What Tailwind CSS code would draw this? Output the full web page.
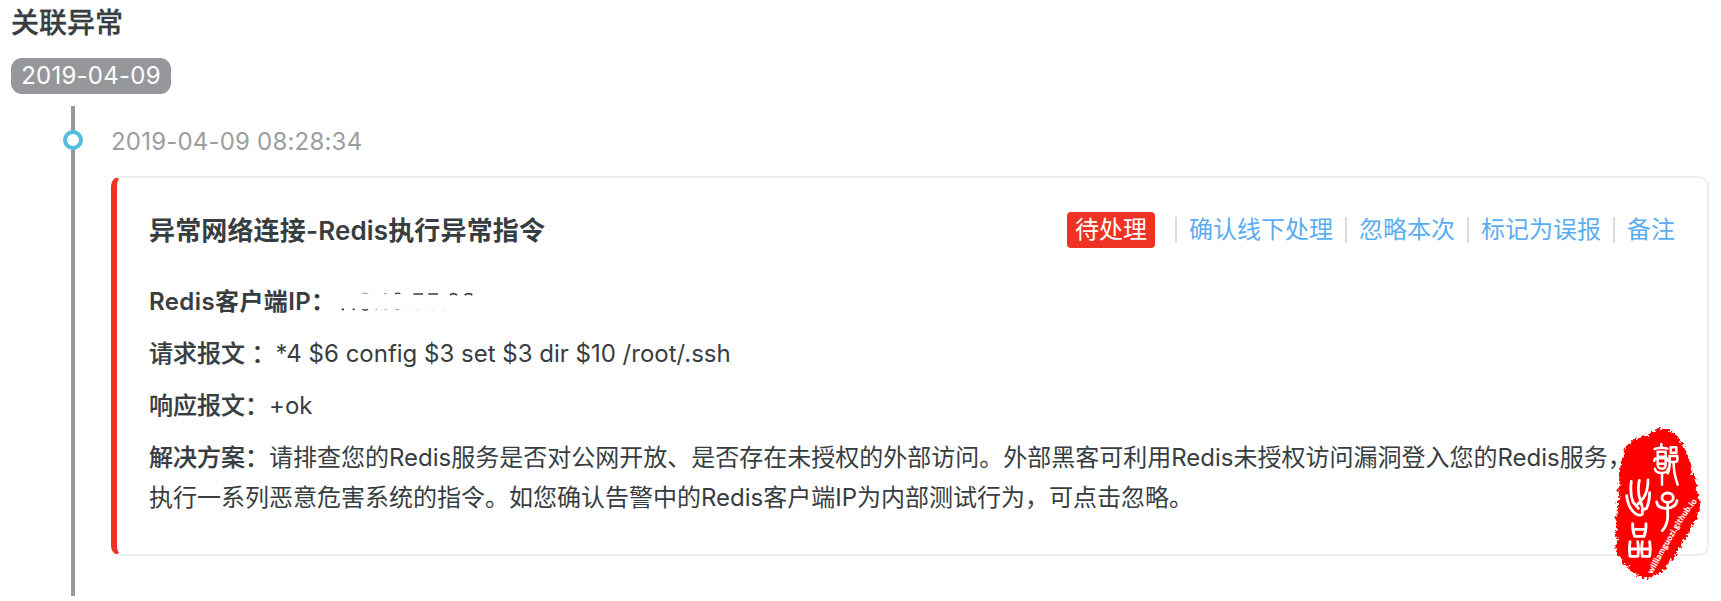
<!DOCTYPE html>
<html lang="zh-CN">
<head>
<meta charset="utf-8">
<title>关联异常</title>
<script src="https://cdn.jsdelivr.net/npm/@tailwindcss/browser@4"></script>
</head>
<body class="bg-white text-[#373d41] font-[Inter,'Noto_Sans_CJK_SC',sans-serif] text-2xl">
<main class="relative h-[601px] w-[1721px] overflow-hidden pl-[11px]">
  <h1 class="h-[58px] pt-px text-[28px] leading-[44px] font-medium [-webkit-text-stroke:0.3px]">关联异常</h1>
  <div class="flex h-9 w-40 items-center justify-center rounded-[11px] bg-[#96979a] tracking-[0.25px] text-white">2019-04-09</div>
  <section class="relative mt-3 ml-[60px] h-[490px] border-l-4 border-[#96999b] pt-4 pl-9">
    <span class="absolute top-6 -left-3 size-5 rounded-full border-4 border-[#55bedb] bg-white"></span>
    <time class="block h-[54px] w-max leading-10 tracking-[0.2px] text-[#9b9ea0]">2019-04-09 08:28:34</time>
    <article class="h-[380px] w-[1598px] rounded-[10px] border-2 border-l-[6px] border-[#eee] border-l-[#ee3324] pt-[34px] pr-8 pl-8">
      <header class="flex h-9 items-center justify-between">
        <h2 class="pt-0.5 text-[26px] tracking-[0.15px] font-semibold">异常网络连接-Redis执行异常指令</h2>
        <nav class="flex items-center text-[#5badf2]">
          <span class="mr-5 flex h-9 w-[88px] items-center justify-center rounded bg-[#ee3324] text-white">待处理</span>
          <a class="border-l-2 border-[#ddd] px-3 leading-[26px]">确认线下处理</a>
          <a class="border-l-2 border-[#ddd] px-3 leading-[26px]">忽略本次</a>
          <a class="border-l-2 border-[#ddd] px-3 leading-[26px]">标记为误报</a>
          <a class="border-l-2 border-[#ddd] pl-3 leading-[26px]">备注</a>
        </nav>
      </header>
      <div class="mt-[34px] flex flex-col gap-3 leading-10">
        <p class="flex items-start"><b class="w-[181px] tracking-[0.4px] font-semibold whitespace-nowrap">Redis客户端IP：</b>
          <svg class="mt-[3px] h-[35px] w-[160px]" viewBox="0 0 480 105" fill="none" stroke="#373d41">
            <g stroke-width="5">
              <path d="M250 27h29M295 27h29"/>
              <path d="M360 30Q370 22 381 30M404 30Q415 22 427 30"/>
              <path d="M195 26Q203 23 211 26" stroke-width="4"/>
              <path d="M35 73h7M68 73h6"/>
              <path d="M97 73Q105 77 114 73" stroke-width="4"/>
            </g>
            <path d="M97 25h18M162 26h9M136 73h6M164 73h6M196 74h12" stroke-width="3" opacity=".5"/>
            <path d="M230 75h8M257 75h14M302 75h12M338 76h7" stroke-width="2" opacity=".2"/>
          </svg>
        </p>
        <p><b class="font-medium [-webkit-text-stroke:0.2px]">请求报文 ：</b>*4 $6 config $3 set $3 dir $10 /root/.ssh</p>
        <p><b class="font-medium [-webkit-text-stroke:0.2px]">响应报文：</b>+ok</p>
        <p class="whitespace-nowrap"><b class="font-medium [-webkit-text-stroke:0.2px]">解决方案：</b>请排查您的Redis服务是否对公网开放、是否存在未授权的外部访问。外部黑客可利用Redis未授权访问漏洞登入您的Redis服务，<br>执行一系列恶意危害系统的指令。如您确认告警中的Redis客户端IP为内部测试行为，可点击忽略。</p>
      </div>
    </article>
  </section>
  <!-- Red seal stamp over the card's corner -->
  <svg class="absolute top-[420px] left-[1600px] h-[165px] w-[121px]" viewBox="0 0 363 495">
    <defs>
      <filter id="rough" x="-10%" y="-10%" width="120%" height="120%" color-interpolation-filters="sRGB">
        <feTurbulence type="fractalNoise" baseFrequency="0.12" numOctaves="2" seed="4" result="n"/>
        <feDisplacementMap in="SourceGraphic" in2="n" scale="22" xChannelSelector="R" yChannelSelector="G"/>
      </filter>
      <path id="rim" d="M157 463 Q196 388 246 306 Q270 270 293 243"/>
    </defs>
    <path filter="url(#rough)" fill="#f00" stroke="#f00" stroke-width="3" d="M73 92 80 78 92 70 98 62 113 56 122 51 145 48 151 38 166 36 175 26 185 29 200 29 213 34 226 44 236 53 240 66 251 83 257 98 262 112 269 127 270 146 274 158 284 172 287 191 286 205 293 225 298 248 297 272 292 290 285 305 272 315 268 331 259 350 247 361 242 380 231 395 222 411 207 423 195 443 178 459 158 468 135 474 115 467 97 456 87 442 70 430 64 415 53 398 48 382 53 361 48 337 51 315 48 293 55 272 54 250 60 230 56 209 61 185 58 158 64 137 64 116 73 110Z"/>
    <g fill="none" stroke="#fff" stroke-width="8.5" stroke-linecap="round" stroke-linejoin="round">
      <g stroke-width="7.5">
        <path d="M184 72V84M164 87Q184 80 202 86M173 95H197V110H173ZM163 123Q163 115 170 115H198Q205 115 205 123M173 120V134Q174 146 185 146Q197 146 197 134V120M174 131H196M165 146Q166 159 185 159Q202 159 204 146M186 159V194"/>
        <path d="M212 82H229V98H212ZM208 108H232V119Q232 126 223 126H211M209 108V128Q209 148 203 160M221 130Q221 160 233 194"/>
      </g>
      <path d="M94 184Q89 220 99 246L115 265M118 181Q111 215 121 241L126 258M144 180Q144 213 131 233L114 252M80 227Q84 265 108 282Q119 288 127 283V264Q133 270 139 266Q148 250 149 218"/>
      <ellipse cx="203" cy="233" rx="17" ry="14"/>
      <path d="M170 246Q173 266 200 265Q227 263 231 242M203 248V280Q205 312 187 332"/>
      <path d="M98 311Q97 333 104 349H132Q139 333 138 311M101 328H136"/>
      <path d="M90 365Q86 387 90 409H114Q118 387 113 365M89 387H115M127 365Q122 387 127 409H149Q153 387 149 365M126 387H150"/>
    </g>
    <text fill="#fff" stroke="#fff" stroke-width="0.5" class="font-[Lato,sans-serif] font-bold" font-size="25"><textPath href="#rim" textLength="257">williamguozi.github.io</textPath></text>
  </svg>
</main>
</body>
</html>
